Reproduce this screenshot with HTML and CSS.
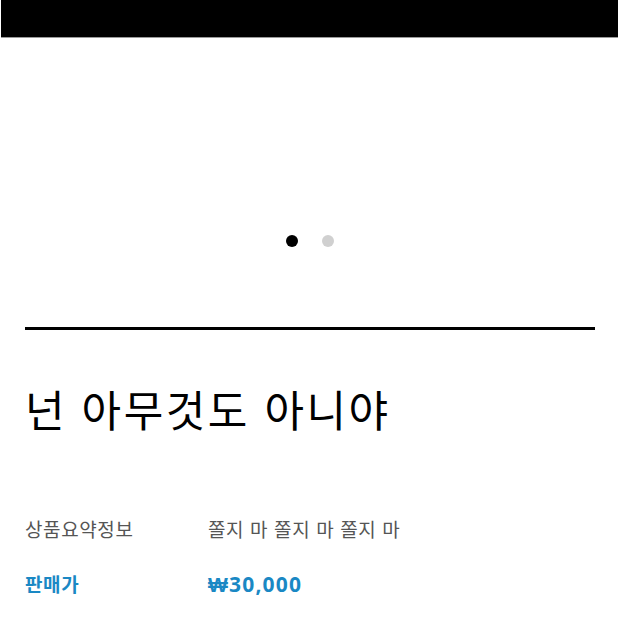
FILE: index.html
```html
<!DOCTYPE html>
<html lang="ko">
<head>
    <meta charset="UTF-8">
    <meta name="viewport" content="width=device-width, initial-scale=1.0">
    <title>넌 아무것도 아니야</title>
    <link rel="stylesheet" href="styles.css">
</head>
<body>

<!-- ===== TOP BAR ===== -->
<header class="top-bar"></header>

<!-- ===== PRODUCT IMAGE SLIDER ===== -->
<div class="slider">
    <div class="slider-dots">
        <span class="dot active"></span>
        <span class="dot"></span>
    </div>
</div>

<!-- ===== PRODUCT INFO ===== -->
<div class="product">
    <h1 class="product-name">넌 아무것도 아니야</h1>
    <table class="info-table">
        <tr>
            <th>상품요약정보</th>
            <td>쫄지 마 쫄지 마 쫄지 마</td>
        </tr>
        <tr class="price-row">
            <th>판매가</th>
            <td><span class="price">₩30,000</span></td>
        </tr>
    </table>
</div>

</body>
</html>
```

FILE: styles.css
```css
:root {
    --primary: #000000;
    --muted: #555555;
    --accent: #1a88c4;
    --font-family: "Noto Sans CJK KR", "Noto Sans", sans-serif;
}
body {
    font-family: var(--font-family);
    background-color: #ffffff;
    color: var(--primary);
    margin: 0;
}
.top-bar {
    height: 37px;
    margin: 0 2px 0 1px;
    background-color: #000;
    border-bottom: 1px solid #9a9a9a;
}
.slider {
    height: 209px;
    display: flex;
    align-items: flex-end;
    justify-content: center;
}
.slider-dots {
    display: flex;
    gap: 24px;
    margin-left: -1px;
}
.dot {
    width: 12px;
    height: 12px;
    border-radius: 50%;
    background-color: #d0d0d0;
}
.dot.active {
    background-color: #000;
}
.product {
    margin: 80px 25px 0 25px;
    padding-top: 53px;
    border-top: 3px solid #000;
}
.product-name {
    font-size: 43px;
    font-weight: 400;
    letter-spacing: 2.5px;
    margin: 0 0 80px 0;
    line-height: 1.2;
}
.info-table {
    border-collapse: collapse;
    font-size: 19px;
    letter-spacing: 0.6px;
}
.info-table th,
.info-table td {
    text-align: left;
    font-weight: 400;
    color: var(--muted);
    padding: 0 0 28px 0;
    vertical-align: middle;
}
.info-table th {
    width: 183px;
}
.price-row th,
.price-row td {
    color: var(--accent);
    font-weight: 700;
}
.price {
    font-family: "Open Sans", sans-serif;
    font-size: 21px;
    letter-spacing: 1.2px;
}
```
